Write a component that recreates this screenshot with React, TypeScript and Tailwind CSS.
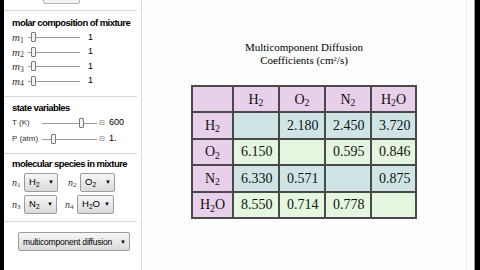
import React from "react";

const sans = { fontFamily: '"Liberation Sans", Arial, sans-serif' };
const serif = { fontFamily: '"Liberation Serif", "Times New Roman", serif' };

function Sub({ base, n, italic, font }: { base: string; n: string; italic?: boolean; font?: React.CSSProperties }) {
  return (
    <span style={font ?? serif}>
      {italic ? <i>{base}</i> : base}
      <sub className="text-[0.7em]">{n}</sub>
    </span>
  );
}

function Slider({ trackW, thumb }: { trackW: number; thumb: number }) {
  return (
    <div className="relative h-[12px] shrink-0" style={{ width: trackW }}>
      <div className="absolute left-0 right-0 top-[6px] h-px bg-[#9a9a9a]" />
      <div
        className="absolute top-[1px] w-[5px] h-[10px] border border-[#7a7a7a] bg-[#f4f4f4] rounded-[1px]"
        style={{ left: thumb }}
      />
    </div>
  );
}

function Popup({ children, w }: { children: React.ReactNode; w: number }) {
  return (
    <div
      className="h-[19px] shrink-0 flex items-center justify-between pl-[4px] pr-[3px] border border-[#9c9c9c] rounded-[2px] bg-gradient-to-b from-[#f7f7f7] to-[#dadada] text-[9.5px] text-black whitespace-nowrap"
      style={{ ...sans, width: w }}
    >
      <span className="leading-none">{children}</span>
      <span className="text-[6px] leading-none">▼</span>
    </div>
  );
}

function MRow({ i }: { i: number }) {
  return (
    <div className="h-[14.5px] flex items-center">
      <div className="w-[16px] text-[11px] text-[#333]">
        <Sub base="m" n={String(i)} italic />
      </div>
      <Slider trackW={52} thumb={3} />
      <div className="ml-[8px] text-[9px] text-black">1</div>
    </div>
  );
}

const PINK = "bg-[#e8d0ea]";
const BLUE = "bg-[#cfe5e5]";
const GREEN = "bg-[#e4f6e0]";

const species: React.ReactNode[] = [
  <>H<sub className="text-[0.7em]">2</sub></>,
  <>O<sub className="text-[0.7em]">2</sub></>,
  <>N<sub className="text-[0.7em]">2</sub></>,
  <>H<sub className="text-[0.7em]">2</sub>O</>,
];
const data: string[][] = [
  ["", "2.180", "2.450", "3.720"],
  ["6.150", "", "0.595", "0.846"],
  ["6.330", "0.571", "", "0.875"],
  ["8.550", "0.714", "0.778", ""],
];

const titleCls = "text-[9.5px] font-bold leading-[12px] text-black tracking-[-0.55px] whitespace-nowrap";

export default function App() {
  const colW = [41, 46, 46, 46, 45];
  return (
    <div className="w-[480px] h-[270px] flex bg-[#fdfdfd] overflow-hidden" style={sans}>
      <div className="w-[4px] bg-black shrink-0" />
      {/* left control panel */}
      <div className="w-[138px] shrink-0 border-r border-[#dcdcdc] bg-white flex flex-col">
        <div className="h-[11px] border-b border-[#d6d6d6] mr-[4px] relative">
          <div className="absolute left-[39px] top-[-4px] w-[37px] h-[8px] border border-[#b5b5b5] rounded-[2px] bg-[#f2f2f2]" />
        </div>
        <div className="h-[86px] border-b border-[#d6d6d6] mr-[4px] pl-[8px] pt-[6px]">
          <div className={titleCls}>molar composition of mixture</div>
          <div className="mt-[1px]">
            <MRow i={1} />
            <MRow i={2} />
            <MRow i={3} />
            <MRow i={4} />
          </div>
        </div>
        <div className="h-[57px] border-b border-[#d6d6d6] mr-[4px] pl-[8px] pt-[5px]">
          <div className={titleCls}>state variables</div>
          <div className="h-[16px] flex items-center mt-[1px]">
            <div className="w-[30px] text-[8px] text-[#333] whitespace-nowrap">T (K)</div>
            <Slider trackW={55} thumb={37} />
            <div className="ml-[2px] text-[7px] text-[#777]">⊟</div>
            <div className="ml-[4px] text-[9px] text-black">600</div>
          </div>
          <div className="h-[16px] flex items-center">
            <div className="w-[30px] text-[8px] text-[#333] whitespace-nowrap">P (atm)</div>
            <Slider trackW={55} thumb={9} />
            <div className="ml-[2px] text-[7px] text-[#777]">⊟</div>
            <div className="ml-[4px] text-[9px] text-black">1.</div>
          </div>
        </div>
        <div className="h-[68px] border-b border-[#d6d6d6] mr-[4px] pl-[8px] pt-[4px]">
          <div className={titleCls}>molecular species in mixture</div>
          <div className="flex items-center mt-[2px] h-[20px]">
            <div className="w-[12px] text-[10px] text-[#333]"><Sub base="n" n="1" italic /></div>
            <Popup w={34}><Sub base="H" n="2" font={sans} /></Popup>
            <div className="w-[12px] ml-[10px] text-[10px] text-[#333]"><Sub base="n" n="2" italic /></div>
            <Popup w={35}><Sub base="O" n="2" font={sans} /></Popup>
          </div>
          <div className="flex items-center mt-[2px] h-[20px]">
            <div className="w-[12px] text-[10px] text-[#333]"><Sub base="n" n="3" italic /></div>
            <Popup w={33}><Sub base="N" n="2" font={sans} /></Popup>
            <div className="w-[12px] ml-[8px] text-[10px] text-[#333]"><Sub base="n" n="4" italic /></div>
            <Popup w={37}><span>H<sub className="text-[0.7em]">2</sub>O</span></Popup>
          </div>
        </div>
        <div className="pl-[14px] pt-[10px]">
          <Popup w={112}><span className="text-[8.5px] tracking-[-0.2px]">multicomponent diffusion</span></Popup>
        </div>
      </div>
      {/* main area */}
      <div className="flex-1 flex flex-col items-center pt-[41px]" style={serif}>
        <div className="text-[11px] leading-[13px] text-black text-center">
          <div>Multicomponent Diffusion</div>
          <div>
            Coefficients (cm<sup className="text-[0.6em]">2</sup>/s)
          </div>
        </div>
        <table className="mt-[18px] border-collapse border-2 border-[#4a4a4a] text-[14px] text-[#111]" style={{ tableLayout: "fixed", width: 225 }}>
          <colgroup>
            {colW.map((w, i) => (
              <col key={i} style={{ width: w }} />
            ))}
          </colgroup>
          <tbody>
            <tr className="h-[26px]">
              <td className={`${PINK} border-2 border-[#4a4a4a]`} />
              {species.map((s, i) => (
                <td key={i} className={`${PINK} border-2 border-[#4a4a4a] text-center`}>{s}</td>
              ))}
            </tr>
            {data.map((row, r) => (
              <tr key={r} className="h-[26.5px]">
                <td className={`${PINK} border-2 border-[#4a4a4a] text-center`}>{species[r]}</td>
                {row.map((v, c) => (
                  <td key={c} className={`${r % 2 === 0 ? BLUE : GREEN} border-2 border-[#4a4a4a] pl-[7px]`}>{v}</td>
                ))}
              </tr>
            ))}
          </tbody>
        </table>
      </div>
      <div className="w-[8px] shrink-0 border-l border-[#ececec]" />
      <div className="w-px shrink-0 bg-[#9a9a9a]" />
      <div className="w-[5px] shrink-0 bg-black" />
    </div>
  );
}
